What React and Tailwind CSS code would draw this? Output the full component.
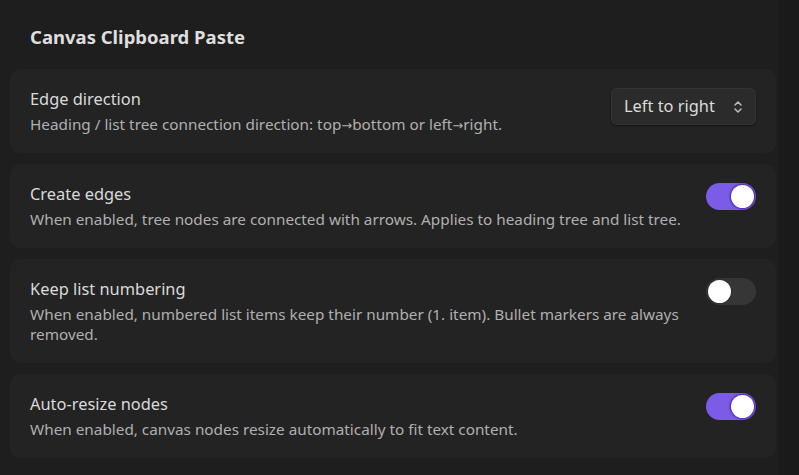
import React, { useState } from 'react';

const Arrow = () => (
  <span style={{ fontFamily: '"DejaVu Sans", sans-serif' }} className="text-[13px] leading-none">
    {'\u2192'}
  </span>
);

const settings = [
  {
    id: 'edge-direction',
    name: 'Edge direction',
    desc: (
      <>
        Heading / list tree connection direction: top<Arrow />bottom or left<Arrow />right.
      </>
    ),
    type: 'select',
    value: 'Left to right',
  },
  {
    id: 'create-edges',
    name: 'Create edges',
    desc: 'When enabled, tree nodes are connected with arrows. Applies to heading tree and list tree.',
    type: 'toggle',
    value: true,
  },
  {
    id: 'keep-numbering',
    name: 'Keep list numbering',
    desc: 'When enabled, numbered list items keep their number (1. item). Bullet markers are always removed.',
    type: 'toggle',
    value: false,
  },
  {
    id: 'auto-resize',
    name: 'Auto-resize nodes',
    desc: 'When enabled, canvas nodes resize automatically to fit text content.',
    type: 'toggle',
    value: true,
  },
];

const Toggle = ({ on, onClick }) => (
  <button
    onClick={onClick}
    className={`flex h-[27px] w-[50px] shrink-0 items-center rounded-full p-[2px] ${on ? 'justify-end bg-[#7b5ce6]' : 'justify-start bg-[#363636]'}`}
  >
    <span
      className={`h-[23px] w-[23px] rounded-full bg-white ${on ? 'shadow-[0_0_2px_1px_rgba(60,20,140,0.8)]' : 'shadow-[0_0_2px_rgba(0,0,0,0.4)]'}`}
    />
  </button>
);

const SelectBox = ({ value }) => (
  <div className="flex h-[37px] w-[145px] shrink-0 items-center justify-between rounded-[6px] bg-[#2b2b2b] pl-[13px] pr-[13px] text-[16.4px] text-[#dcdcdc] shadow-[0_1px_2px_rgba(0,0,0,0.5),inset_0_0_0_1px_#333]">
    <span>{value}</span>
    <svg width="10" height="14" viewBox="0 0 10 14" fill="none" stroke="#bdbdbd" strokeWidth="1.5" strokeLinecap="round" strokeLinejoin="round">
      <path d="M2 5 L5 2 L8 5" />
      <path d="M2 9 L5 12 L8 9" />
    </svg>
  </div>
);

export default function App() {
  const [values, setValues] = useState(() =>
    Object.fromEntries(settings.map((s) => [s.id, s.value]))
  );

  return (
    <div
      className="flex min-h-[475px] w-full bg-[#1e1e1e]"
      style={{ fontFamily: '"Noto Sans", "Open Sans", sans-serif' }}
    >
      <div className="flex-1 pl-[10px] pr-[2px] pt-[25px]">
        <h2 className="mb-[20px] pl-[20px] text-[18.5px] leading-[24px] font-bold text-[#dedede]">
          Canvas Clipboard Paste
        </h2>

        <div className="flex flex-col gap-[11px]">
          {settings.map((s) => (
            <div
              key={s.id}
              className="flex items-start justify-between gap-6 rounded-[10px] bg-[#232323] px-[20px] py-[19px]"
            >
              <div className="flex flex-col">
                <div className="h-[22px] text-[16.4px] leading-[22px] text-[#dadada]">{s.name}</div>
                <div className="mt-[4px] text-[15.3px] leading-[20px] text-[#b0b0b0]">{s.desc}</div>
              </div>
              {s.type === 'select' ? (
                <SelectBox value={values[s.id]} />
              ) : (
                <Toggle
                  on={values[s.id]}
                  onClick={() => setValues((v) => ({ ...v, [s.id]: !v[s.id] }))}
                />
              )}
            </div>
          ))}
        </div>
      </div>
      <div className="w-[21px] shrink-0 bg-[#1a1a1a]" />
    </div>
  );
}
